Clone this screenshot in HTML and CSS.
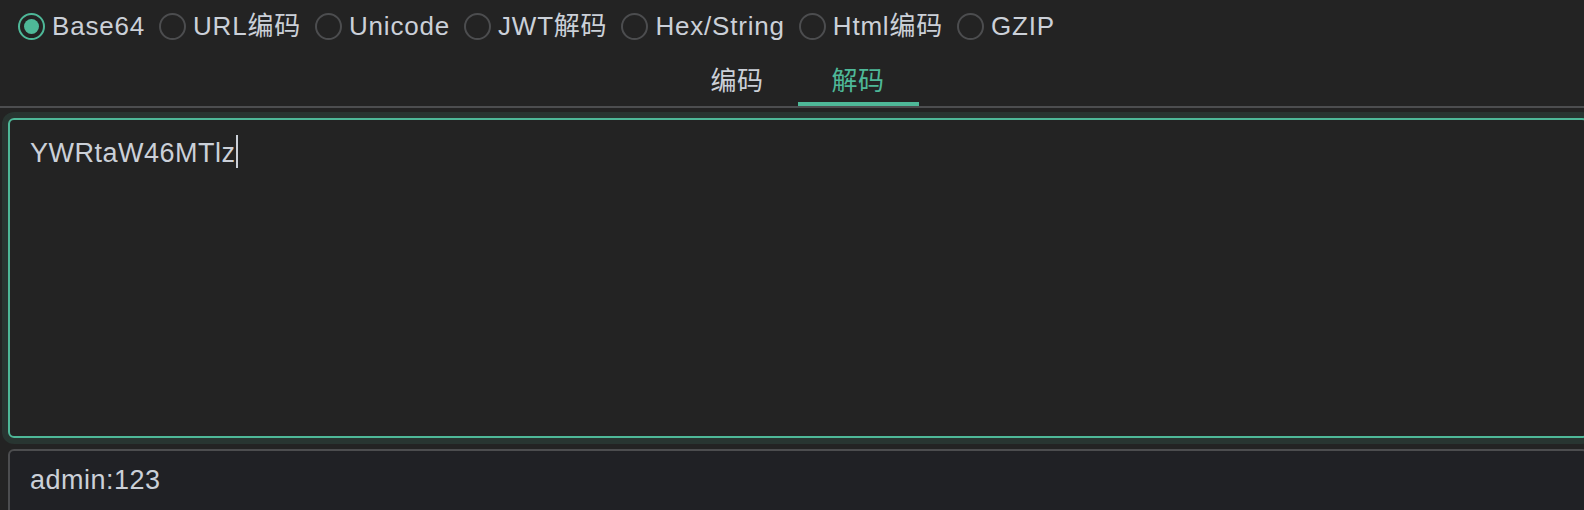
FILE: index.html
```html
<!DOCTYPE html>
<html lang="zh-CN">

<head>
  <meta charset="UTF-8">
  <meta name="viewport" content="width=device-width, initial-scale=1.0">
  <title>编解码</title>
  <link rel="stylesheet" href="styles.css">
</head>

<body>

  <div class="types">
    <label class="radio checked"><span class="dot"></span>Base64</label>
    <label class="radio"><span class="dot"></span>URL编码</label>
    <label class="radio"><span class="dot"></span>Unicode</label>
    <label class="radio"><span class="dot"></span>JWT解码</label>
    <label class="radio"><span class="dot"></span>Hex/String</label>
    <label class="radio"><span class="dot"></span>Html编码</label>
    <label class="radio"><span class="dot"></span>GZIP</label>
  </div>

  <div class="tabs">
    <div class="tab">编码</div>
    <div class="tab active">解码</div>
  </div>

  <div class="input-box">YWRtaW46MTlz<span class="caret"></span></div>

  <div class="output-box">admin:123</div>

</body>

</html>
```

FILE: styles.css
```css
body {
  font-family: 'Liberation Sans', 'Noto Sans CJK SC', sans-serif;
  margin: 0;
  padding: 0;
  background-color: #232323;
  color: #cbd0d8;
  overflow: hidden;
  height: 510px;
}

/* radio row */
.types {
  display: flex;
  align-items: center;
  height: 52px;
  padding-left: 18px;
  font-size: 26px;
  letter-spacing: 0.8px;
}

.radio {
  display: flex;
  align-items: center;
  gap: 7px;
  margin-right: 14px;
  line-height: 30px;
  white-space: nowrap;
}

.dot {
  box-sizing: border-box;
  width: 27px;
  height: 27px;
  border: 2px solid #4c4d4f;
  border-radius: 50%;
  display: flex;
  align-items: center;
  justify-content: center;
}

.radio.checked .dot {
  border-color: #4eb898;
}

.radio.checked .dot::after {
  content: '';
  width: 15px;
  height: 15px;
  border-radius: 50%;
  background-color: #4eb898;
}

/* tabs */
.tabs {
  display: flex;
  justify-content: center;
  padding-left: 11px;
  border-bottom: 2px solid #4c4d4f;
}

.tab {
  padding: 8px 34px 0;
  line-height: 42px;
  font-size: 26px;
  letter-spacing: 0.5px;
  border-bottom: 4px solid transparent;
}

.tab.active {
  color: #4eb898;
  border-bottom-color: #4eb898;
}

/* text areas */
.input-box {
  box-sizing: border-box;
  margin: 10px -4px 0 8px;
  height: 320px;
  padding: 15px 20px;
  font-size: 27px;
  letter-spacing: 0.5px;
  line-height: 34px;
  border: 2px solid #4eb898;
  border-radius: 6px;
  box-shadow: 0 0 0 6px #283531;
}

.caret {
  display: inline-block;
  width: 2px;
  height: 33px;
  vertical-align: -6px;
  background-color: #cbd0d8;
}

.output-box {
  box-sizing: border-box;
  margin: 11px -4px 0 8px;
  height: 100px;
  padding: 12px 20px;
  font-size: 27px;
  letter-spacing: 0.5px;
  line-height: 34px;
  background-color: #202125;
  border: 2px solid #4c4d4f;
  border-radius: 6px;
}
```
